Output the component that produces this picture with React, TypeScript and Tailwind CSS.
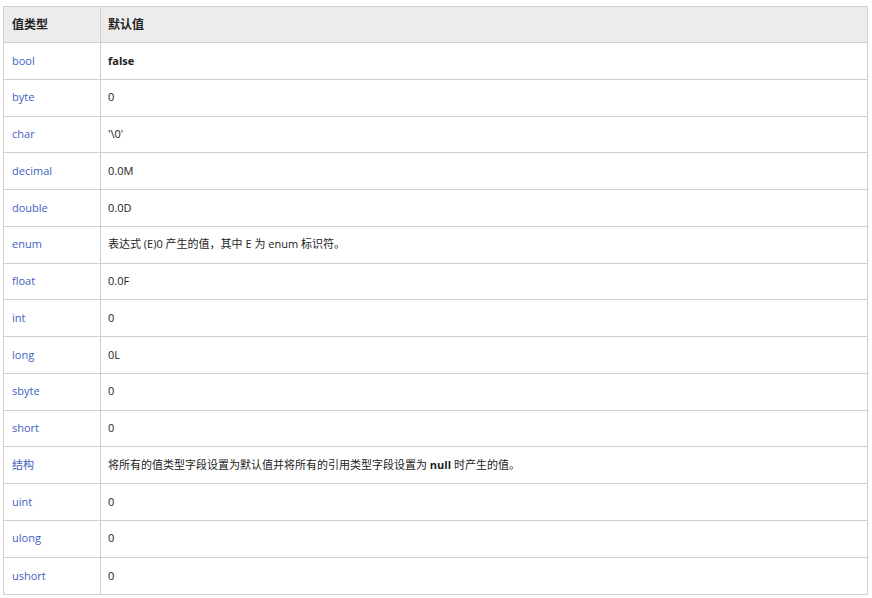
import React from "react";

type Row = { k: string; v: React.ReactNode };

const rows: Row[] = [
  { k: "bool", v: <span className="font-bold">false</span> },
  { k: "byte", v: "0" },
  { k: "char", v: "'\\0'" },
  { k: "decimal", v: "0.0M" },
  { k: "double", v: "0.0D" },
  { k: "enum", v: "表达式 (E)0 产生的值，其中 E 为 enum 标识符。" },
  { k: "float", v: "0.0F" },
  { k: "int", v: "0" },
  { k: "long", v: "0L" },
  { k: "sbyte", v: "0" },
  { k: "short", v: "0" },
  {
    k: "结构",
    v: (
      <>
        将所有的值类型字段设置为默认值并将所有的引用类型字段设置为 <span className="font-bold">null</span> 时产生的值。
      </>
    ),
  },
  { k: "uint", v: "0" },
  { k: "ulong", v: "0" },
  { k: "ushort", v: "0" },
];

export default function App() {
  return (
    <div
      className="w-[872px] h-[598px] bg-white pt-[6px] pl-[3px]"
      style={{ fontFamily: '"Open Sans", "Noto Sans CJK SC", sans-serif' }}
    >
      <div className="w-[865px] border border-[#cfcfcf] text-[11px] text-[#222]">
        <div className="flex h-[36px] bg-[#ececec] border-b border-[#cfcfcf] font-bold text-[12px]">
          <div className="w-[97px] border-r border-[#cfcfcf] flex items-center pl-[8px]">值类型</div>
          <div className="flex-1 flex items-center pl-[7px]">默认值</div>
        </div>
        {rows.map((r, i) => (
          <div
            key={i}
            className={`flex h-[36.75px] ${i < rows.length - 1 ? "border-b border-[#cfcfcf]" : ""}`}
          >
            <div className="w-[97px] border-r border-[#cfcfcf] flex items-center pl-[8px] text-[#3d5fc4]">
              <span>{r.k}</span>
            </div>
            <div className="flex-1 flex items-center pl-[7px]">
              <span>{r.v}</span>
            </div>
          </div>
        ))}
      </div>
    </div>
  );
}
